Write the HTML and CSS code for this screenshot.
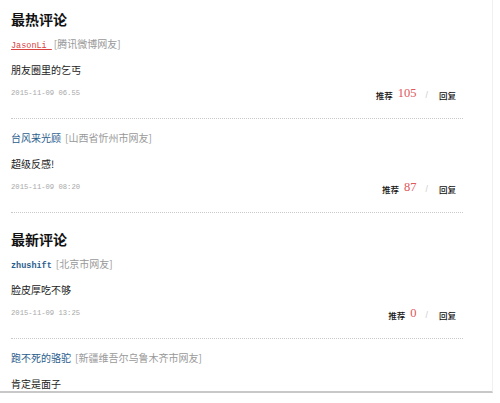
FILE: index.html
```html
<!DOCTYPE html>
<html lang="zh-CN">
<head>
    <meta charset="UTF-8">
    <title>评论</title>
    <link rel="stylesheet" href="styles.css">
</head>
<body>

<div class="page">
    <div class="comments">
        <h2>最热评论</h2>
        <div class="item">
            <div class="user"><a class="name hot" href="#">JasonLi </a><span class="from">[腾讯微博网友]</span></div>
            <p class="text">朋友圈里的乞丐</p>
            <div class="meta">
                <span class="date">2015-11-09 06.55</span>
                <span class="acts">推荐<em>105</em><i>/</i>回复</span>
            </div>
        </div>
        <div class="item">
            <div class="user"><a class="name" href="#">台风来光顾</a><span class="from">[山西省忻州市网友]</span></div>
            <p class="text">超级反感!</p>
            <div class="meta">
                <span class="date">2015-11-09 08:20</span>
                <span class="acts">推荐<em>87</em><i>/</i>回复</span>
            </div>
        </div>

        <h2 class="second">最新评论</h2>
        <div class="item">
            <div class="user"><a class="name mono" href="#">zhushift</a><span class="from">[北京市网友]</span></div>
            <p class="text">脸皮厚吃不够</p>
            <div class="meta">
                <span class="date">2015-11-09 13:25</span>
                <span class="acts">推荐<em>0</em><i>/</i>回复</span>
            </div>
        </div>
        <div class="item">
            <div class="user"><a class="name" href="#">跑不死的骆驼</a><span class="from">[新疆维吾尔乌鲁木齐市网友]</span></div>
            <p class="text">肯定是面子</p>
        </div>
    </div>
</div>

</body>
</html>
```

FILE: styles.css
```css
body {
    margin: 0;
    background: #fff;
    font-family: "Noto Sans CJK SC", "Liberation Sans", sans-serif;
    color: #333;
}

/* outer frame */
.page {
    width: 481px;
    height: 391px;
    padding-left: 11px;
    overflow: hidden;
    border-right: 1px solid #f0f0f0;
    border-bottom: 2px solid #c8c8c8;
}

.comments {
    width: 452px;
}

.comments h2 {
    margin: 8px 0 0 0;
    font-size: 14px;
    line-height: 22px;
    font-weight: bold;
    color: #111;
}

.comments h2.second {
    margin-top: 15px;
}

/* one comment */
.item {
    padding: 9px 0 0 0;
}

h2 + .item {
    padding-top: 4px;
}

.item:has(.meta) {
    padding-bottom: 15px;
    border-bottom: 1px dotted #c8c8c8;
}

.user {
    height: 20px;
    line-height: 20px;
    font-size: 10px;
    white-space: nowrap;
}

.name {
    color: #2b5d8c;
    text-decoration: none;
    margin-right: 4px;
}

.name.hot {
    font-family: "Liberation Mono", monospace;
    font-size: 8.5px;
    color: #d9423f;
    text-decoration: underline;
    margin-right: 2px;
}

.name.mono {
    font-family: "Liberation Mono", monospace;
    font-size: 8.5px;
    font-weight: bold;
}

.from {
    color: #999;
}

.text {
    margin: 6px 0 0 0;
    font-size: 10px;
    line-height: 20px;
    color: #222;
}

.meta {
    margin-top: 3px;
    display: flex;
    justify-content: space-between;
    align-items: center;
    height: 20px;
    padding-right: 7px;
}

.date {
    font-family: "Liberation Mono", monospace;
    font-size: 7.2px;
    color: #a8a8a8;
}

.acts {
    display: flex;
    align-items: center;
    font-size: 8.5px;
    font-weight: 500;
    color: #111;
    padding-top: 3px;
}

.acts em {
    font-style: normal;
    font-weight: normal;
    font-family: "Liberation Serif", serif;
    font-size: 12.5px;
    color: #e0575b;
    margin: -2px 9px 0 5px;
}

.acts i {
    font-style: normal;
    font-weight: normal;
    color: #ccc;
    font-family: "Liberation Sans", sans-serif;
    margin-right: 11px;
}
```
